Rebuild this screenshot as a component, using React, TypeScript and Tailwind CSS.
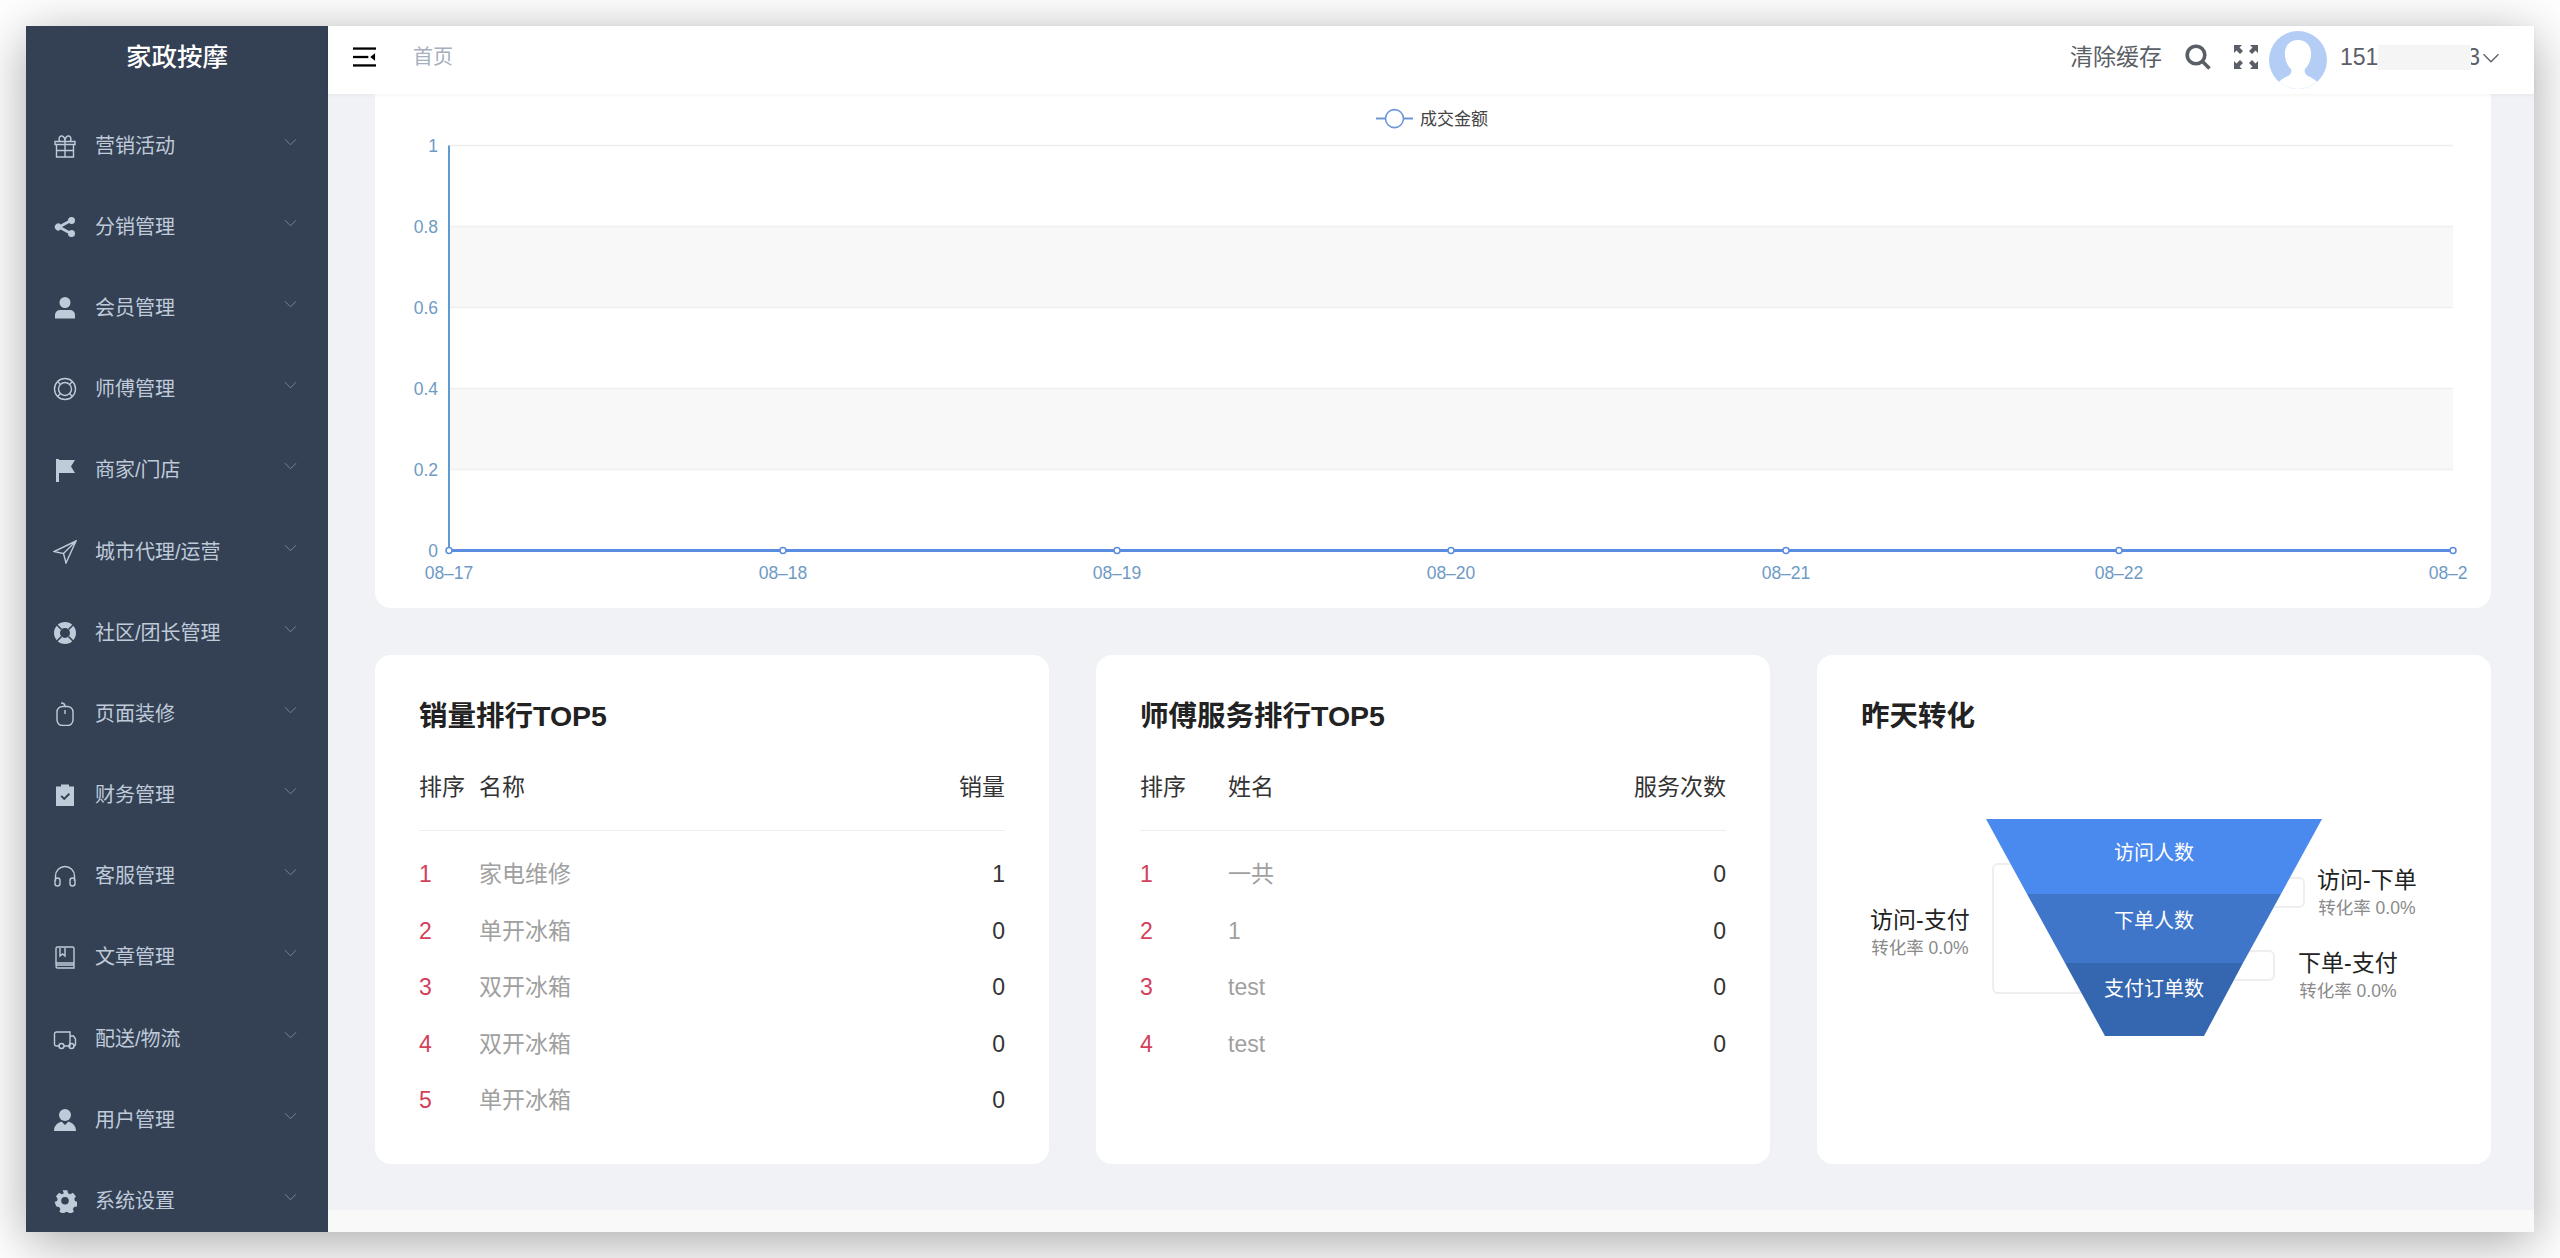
import React from "react";

const FONT = "font-['Liberation_Sans','Noto_Sans_CJK_SC',sans-serif]";

const Chevron = ({ className = "" }: { className?: string }) => (
  <svg viewBox="0 0 14 8" className={className} fill="none" stroke="currentColor" strokeWidth="1">
    <path d="M1 1l6 6 6-6" />
  </svg>
);

const I = ({ children, fill }: { children: React.ReactNode; fill?: boolean }) => (
  <svg
    viewBox="0 0 24 24"
    className="w-6 h-6 shrink-0 text-[#bfcbd9]"
    fill={fill ? "currentColor" : "none"}
    stroke={fill ? "none" : "currentColor"}
    strokeWidth={fill ? 0 : 1.4}
  >
    {children}
  </svg>
);

const icons: React.ReactNode[] = [
  <I key="g"><path d="M2 7.500h20v3H2zM3.500 10.500V23h17V10.500M12 7.500V23M3.500 16.500h17M7 7.500C5 5 6.500 1.500 9 2c2 .4 3 3 3 5.500C12 5 13 2.400 15 2c2.500-.500 4 3 2 5.500" /></I>,
  <I key="s" fill><path d="M18.500 2a3.500 3.500 0 0 1 0 7c-.9 0-1.700-.350-2.300-.900L9 12l7.200 3.900c.600-.550 1.400-.900 2.300-.900a3.500 3.500 0 1 1-3.500 3.500L7.700 14.600a3.500 3.500 0 1 1 0-5.200L15 5.500A3.500 3.500 0 0 1 18.500 2z" /></I>,
  <I key="u" fill><circle cx="12" cy="6.500" r="5.500" /><path d="M2 19a5 5 0 0 1 5-5h10a5 5 0 0 1 5 5v3.500H2z" /></I>,
  <I key="l"><circle cx="12" cy="12" r="10.500" /><circle cx="12" cy="12" r="6.500" /><path d="M4.500 4.500l3 3M19.500 4.500l-3 3M4.500 19.500l3-3M19.500 19.500l-3-3" /></I>,
  <I key="f" fill><path d="M3 1h3v23H3zM6 2h16l-4 6.500 4 6.500H6z" /></I>,
  <I key="n"><path d="M23 1L1 11.500l9.500 2 2.500 9.500zM10.500 13.500L23 1" /></I>,
  <I key="o" fill><path fillRule="evenodd" d="M12 1a11 11 0 1 0 0 22 11 11 0 0 0 0-22zm0 6a5 5 0 1 1 0 10 5 5 0 0 1 0-10z" /><path stroke="#344054" strokeWidth="1.600" d="M4 4l4.500 4.500M20 4l-4.500 4.500M4 20l4.500-4.500M20 20l-4.500-4.500" /></I>,
  <I key="m"><rect x="4" y="4.500" width="16" height="19" rx="5.500" /><path d="M12 8v4M12 4.500C12 2.500 10.500 1 8 1" /></I>,
  <I key="c" fill><path fillRule="evenodd" d="M3 3.500h5V1.500h8v2h5V23H3zM7.500 13.500l1.300-1.300 2.400 2.400 4.500-4.500 1.300 1.300-5.800 5.800z" /></I>,
  <I key="h"><path d="M2.500 17V12a9.500 9.500 0 0 1 19 0v5M2 16.500a2.500 2.500 0 0 1 5 0v3a2.500 2.500 0 0 1-5 0zM17 16.500a2.500 2.500 0 0 1 5 0v3a2.500 2.500 0 0 1-5 0z" /></I>,
  <I key="b"><path d="M3 20V3.500A1.500 1.500 0 0 1 4.500 2h15A1.500 1.500 0 0 1 21 3.500V23H4.500A1.500 1.500 0 0 1 3 21.500 1.500 1.500 0 0 1 4.500 20H21M3 18h18M7 3v8l2.500-2 2.500 2V3" /></I>,
  <I key="t"><path d="M7 19H3.500A2 2 0 0 1 1.500 17V7A2 2 0 0 1 3.500 5H17v14h-6M17 9h3.500l2 3v5a2 2 0 0 1-2 2H20" /><circle cx="8.500" cy="19" r="2.500" /><circle cx="18.500" cy="19" r="2.500" /></I>,
  <I key="a" fill><circle cx="12" cy="7" r="6" /><path d="M1 23c0-5 3-8 7.500-9.500L12 17l3.500-3.500C20 15 23 18 23 23z" /></I>,
  <I key="e" fill><path fillRule="evenodd" d="M9.500 1h5l.7 3 2.300 1 2.700-1.500 3.300 3.800-1.700 2.500.6 2.400 2.600 1-.500 4.800-2.900.4-1.300 2.200 1 2.800-4.200 2.500-2.100-2.100h-2.600l-2 2.100-4.300-2.500 1-2.800-1.300-2.200-2.900-.4L1 13.200l2.600-1 .6-2.400L2.500 7.300l3.300-3.800L8.500 5l2.300-1zM12 8a4 4 0 1 0 0 8 4 4 0 0 0 0-8z" transform="translate(0.600 0.400) scale(.95)" /></I>,
];

const menu = ["营销活动","分销管理","会员管理","师傅管理","商家/门店","城市代理/运营","社区/团长管理","页面装修","财务管理","客服管理","文章管理","配送/物流","用户管理","系统设置"];

const Sidebar = () => (
  <aside className="w-[302px] shrink-0 bg-[#344054] flex flex-col overflow-hidden">
    <div className="h-[62px] shrink-0 flex items-center justify-center text-white text-[25.500px] font-medium">家政按摩</div>
    <nav className="flex flex-col shrink-0 pt-[17px]">
      {menu.map((m, i) => (
        <div key={m} className="h-[81.200px] flex items-center pl-[27px] pr-[31px] text-[#bfcbd9] text-[20px]">
          {icons[i]}
          <span className="ml-[18px] flex-1">{m}</span>
          <Chevron className="w-[13px] h-[8px] text-[#7c899b] -mt-[8px]" />
        </div>
      ))}
    </nav>
  </aside>
);

const Header = () => (
  <header className="relative z-10 h-[68px] shrink-0 bg-white flex items-center pb-[6px] shadow-[0_1px_4px_rgba(0,0,0,0.05)]">
    <svg viewBox="0 0 24 20" className="ml-[25px] w-[23px] h-[20px] text-black" fill="currentColor">
      <rect x="0" y="0" width="24" height="2.400" />
      <rect x="0" y="8.800" width="16" height="2.400" />
      <rect x="0" y="17.600" width="24" height="2.400" />
      <path d="M23 6v8l-5-4z" />
    </svg>
    <span className="ml-[37px] text-[20px] text-[#a6afbd]">首页</span>
    <div className="ml-auto flex items-center">
      <span className="text-[23px] text-[#5a5e66]">清除缓存</span>
      <svg viewBox="0 0 26 26" className="ml-[23px] w-[26px] h-[26px] text-[#5a5e66]" fill="none" stroke="currentColor" strokeWidth="3.600">
        <circle cx="11" cy="11" r="8.800" />
        <path d="M17.500 17.500l7 7" />
      </svg>
      <svg viewBox="0 0 24 24" className="ml-[23px] w-[24px] h-[24px] text-[#5a5e66]" fill="currentColor">
        <path d="M0 0h8L5.500 2.500 9 6 6 9 2.500 5.500 0 8zM24 0v8l-2.500-2.500L18 9l-3-3 3.500-3.500L16 0zM0 24v-8l2.500 2.500L6 15l3 3-3.500 3.500L8 24zM24 24h-8l2.500-2.500L15 18l3-3 3.500 3.500L24 16z" />
      </svg>
      <div className="ml-[11px] mt-[5px] w-[58px] h-[58px] rounded-full overflow-hidden bg-[#b4cdf5]">
        <svg viewBox="0 0 58 58" className="w-full h-full" fill="#ffffff">
          <path d="M29 9c-9 0-14 7-13 16 .6 6 3 10 6 13 1 2 0 5-3 7-5 2-9 5-12 9 4 3 13 5 22 5s18-2 22-5c-3-4-7-7-12-9-3-2-4-5-3-7 3-3 5.400-7 6-13 1-9-4-16-13-16z" />
        </svg>
      </div>
      <div className="relative ml-[13px] w-[160px] h-[25px] flex items-center justify-between text-[23px] text-[#5a5e66]">
        <span>151</span>
        <span className="mr-[20px]">3</span>
        <div className="absolute left-[38px] top-0 w-[93px] h-[25px] bg-[#f5f5f6]" />
        <Chevron className="absolute right-0 top-[8px] w-[18px] h-[10px]" />
      </div>
      <div className="w-[34px]" />
    </div>
  </header>
);

const Chart = () => {
  const ys = [145, 226, 307, 388, 469, 550];
  const yl = ["1", "0.8", "0.6", "0.4", "0.2", "0"];
  const xs = [449, 783, 1117, 1451, 1786, 2119, 2453];
  const xl = ["08-17", "08-18", "08-19", "08-20", "08-21", "08-22", "08-23"];
  return (
    <div className="h-[514px] shrink-0 bg-white rounded-b-[16px] overflow-hidden">
      <svg viewBox="375 93.400 2116 514" className="w-[2116px] h-[514px] block" style={{ fontFamily: "'Liberation Sans','Noto Sans CJK SC',sans-serif" }}>
        <clipPath id="clip"><rect x="375" y="94" width="2093" height="514" /></clipPath>
        <rect x="449" y="226" width="2004" height="81" fill="#f8f8f8" />
        <rect x="449" y="388" width="2004" height="81" fill="#f8f8f8" />
        {ys.slice(0, 5).map((y) => (
          <line key={y} x1="449" x2="2453" y1={y} y2={y} stroke="#eeeeee" strokeWidth="1.500" />
        ))}
        <line x1="449" x2="449" y1="145" y2="550" stroke="#5f9bd0" strokeWidth="2" />
        {ys.map((y, i) => (
          <text key={y} x="438" y={y + 6} textAnchor="end" fontSize="17.500" fill="#6e9ac4">{yl[i]}</text>
        ))}
        <line x1="449" x2="2453" y1="550" y2="550" stroke="#5a8ce0" strokeWidth="3" />
        {xs.map((x) => (
          <circle key={x} cx={x} cy="550" r="3" fill="#fff" stroke="#5a8ce0" strokeWidth="1.500" />
        ))}
        <g clipPath="url(#clip)">
          {xs.map((x, i) => (
            <text key={x} x={x} y="578" textAnchor="middle" fontSize="17.500" fill="#6e9ac4">{xl[i].replace("-", "–")}</text>
          ))}
        </g>
        <line x1="1376" x2="1413" y1="118" y2="118" stroke="#6e96d8" strokeWidth="2" />
        <circle cx="1394.500" cy="118" r="9" fill="#fff" stroke="#6e96d8" strokeWidth="1.600" />
        <text x="1420" y="124" fontSize="17" fill="#444">成交金额</text>
      </svg>
    </div>
  );
};

type Row = [string, string];
const Rank = ({ title, cols, rows, nameX }: { title: string; cols: string[]; rows: Row[]; nameX: string }) => (
  <section className="w-[674px] h-[509px] bg-white rounded-[16px] px-[44px]">
    <h3 className="pt-[34px] h-[88px] flex items-center text-[28.500px] font-bold text-[#222] leading-none">{title}</h3>
    <div className="mt-[20px] h-[68px] pb-[18px] flex items-center border-b border-[#eeeeee] text-[23px] text-[#333]">
      <span className={nameX}>{cols[0]}</span>
      <span className="flex-1">{cols[1]}</span>
      <span>{cols[2]}</span>
    </div>
    <div className="mt-[15px] flex flex-col">
      {rows.map((r, i) => (
        <div key={i} className="h-[56.600px] flex items-center text-[23px]">
          <span className={`${nameX} text-[#d2405a]`}>{i + 1}</span>
          <span className="flex-1 text-[#a0a0a0]">{r[0]}</span>
          <span className="text-[#333]">{r[1]}</span>
        </div>
      ))}
    </div>
  </section>
);

const StageLabel = ({ title, className }: { title: string; className: string }) => (
  <div className={`absolute text-center ${className}`}>
    <div className="text-[23px] leading-[30px] text-[#222]">{title}</div>
    <div className="text-[17.500px] leading-[24px] text-[#8a8a8a] mt-[1px]">转化率 0.0%</div>
  </div>
);

const Funnel = () => (
  <section className="w-[674px] h-[509px] bg-white rounded-[16px] relative">
    <h3 className="ml-[44px] pt-[34px] h-[88px] flex items-center text-[28.500px] font-bold text-[#222] leading-none">昨天转化</h3>
    <div className="absolute left-[175px] top-[208px] w-[150px] h-[131px] border-2 border-[#eeeeee] rounded-[6px]" />
    <div className="absolute left-[400px] top-[222px] w-[88px] h-[31px] border-2 border-[#eeeeee] rounded-[6px]" />
    <div className="absolute left-[358px] top-[295px] w-[100px] h-[31px] border-2 border-[#eeeeee] rounded-[6px]" />
    <svg viewBox="0 0 336 217" className="absolute left-[169px] top-[164px] w-[336px] h-[217px]">
      <path d="M0 0H336L295 75H41z" fill="#4a8aef" />
      <path d="M41 75H295L257 144H79z" fill="#3f76ca" />
      <path d="M79 144H257L218 217H119z" fill="#3566b0" />
    </svg>
    <div className="absolute left-[169px] top-[188px] w-[336px] text-center text-[20px] leading-none text-white">访问人数</div>
    <div className="absolute left-[169px] top-[256px] w-[336px] text-center text-[20px] leading-none text-white">下单人数</div>
    <div className="absolute left-[169px] top-[324px] w-[336px] text-center text-[20px] leading-none text-white">支付订单数</div>
    <StageLabel title="访问-支付" className="left-[53px] top-[250px]" />
    <StageLabel title="访问-下单" className="left-[500px] top-[210px]" />
    <StageLabel title="下单-支付" className="left-[481px] top-[293px]" />
  </section>
);

export default function App() {
  return (
    <div className={`w-[2560px] h-[1258px] bg-white p-[26px] overflow-hidden ${FONT}`}>
      <div className="w-[2508px] h-[1206px] flex shadow-[0_10px_50px_rgba(0,0,0,0.35)]">
        <Sidebar />
        <main className="flex-1 min-w-0 flex flex-col bg-[#f0f2f6]">
          <Header />
          <div className="flex-1 flex flex-col pl-[47px] pr-[43px]">
            <Chart />
            <div className="mt-[47px] flex justify-between">
              <Rank
                title="销量排行TOP5"
                cols={["排序", "名称", "销量"]}
                nameX="w-[60px]"
                rows={[["家电维修", "1"], ["单开冰箱", "0"], ["双开冰箱", "0"], ["双开冰箱", "0"], ["单开冰箱", "0"]]}
              />
              <Rank
                title="师傅服务排行TOP5"
                cols={["排序", "姓名", "服务次数"]}
                nameX="w-[88px]"
                rows={[["一共", "0"], ["1", "0"], ["test", "0"], ["test", "0"]]}
              />
              <Funnel />
            </div>
          </div>
          <div className="h-[22px] shrink-0 bg-[#f9f9f9]" />
        </main>
      </div>
    </div>
  );
}
